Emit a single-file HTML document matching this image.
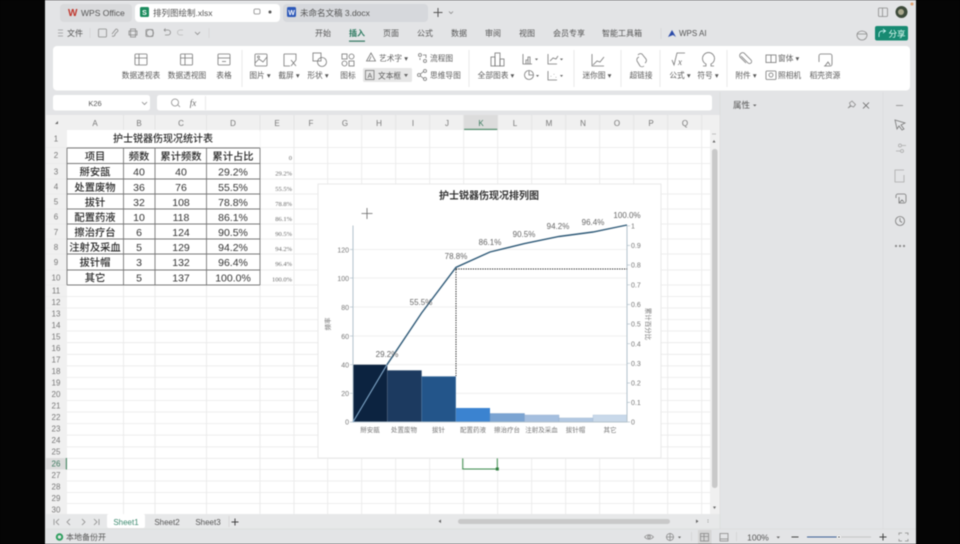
<!DOCTYPE html>
<html><head><meta charset="utf-8"><style>
html,body{margin:0;padding:0;background:#000;width:960px;height:544px;overflow:hidden}
svg{display:block;filter:blur(.5px)}
text{font-family:"Liberation Sans","Noto Sans CJK SC",sans-serif;fill:#555}
.r{font-size:7.7px;text-anchor:middle;fill:#5a5a5a}
.m{font-size:8px;text-anchor:middle;fill:#555}
.h{font-size:8px;text-anchor:middle;fill:#777}
.t{font-size:10.5px;text-anchor:middle;fill:#333}
.b{font-size:10.3px;text-anchor:middle;fill:#2a2a2a;font-weight:500}
.e{font-family:"Liberation Serif",serif;font-size:6.5px;text-anchor:end;fill:#6a6a6a}
.a{font-size:7px;fill:#777}
.p{font-size:8px;text-anchor:middle;fill:#666}
.c{font-size:6.5px;text-anchor:middle;fill:#777}
.i{fill:none;stroke:#777;stroke-width:.8}
.l{fill:none;stroke:#8a8a8a;stroke-width:.8}
</style></head><body>
<svg width="960" height="544" viewBox="0 0 960 544" xmlns="http://www.w3.org/2000/svg">
<rect width="960" height="544" fill="#050505"/>
<rect x="45" width="871" height="544" fill="#e3e4e6"/>

<!-- title tabs -->
<rect x="60" y="4" width="72" height="18" rx="4" fill="#d9dadc"/>
<rect x="135" y="4" width="145" height="18" rx="4" fill="#fff"/>
<rect x="283" y="4" width="145" height="18" rx="4" fill="#d6d8dc"/>
<text x="68" y="16" style="font-size:10px;font-weight:bold;fill:#c0362c">W</text>
<text x="81" y="16" style="font-size:8.5px;fill:#555">WPS Office</text>
<rect x="140" y="7" width="9" height="10" rx="1.500" fill="#1c8c5e"/><text x="144.500" y="15" style="font-size:7px;fill:#fff;text-anchor:middle;font-weight:bold">S</text>
<text x="153" y="16" style="font-size:8.500px;fill:#555">排列图绘制.xlsx</text>
<rect x="254" y="9" width="6" height="5" rx="1.500" class="l"/><circle cx="270" cy="12" r="1.500" fill="#555"/>
<rect x="287" y="7" width="9" height="10" rx="1.500" fill="#2b57b8"/><text x="291.500" y="15" style="font-size:7px;fill:#fff;text-anchor:middle;font-weight:bold">W</text>
<text x="300" y="16" style="font-size:8.500px;fill:#555">未命名文稿 3.docx</text>
<path d="M438 8v9M433.500 12.500h9" stroke="#555" stroke-width="1" fill="none"/>
<path d="M449 11.500l2 2 2-2" class="l"/>
<rect x="878.500" y="8" width="9" height="8.500" rx="1" class="l"/><path d="M882.500 8v8.500" class="l"/>
<circle cx="901.500" cy="12" r="6" fill="#3d4a3a"/><circle cx="901" cy="12" r="3" fill="#a9a78c"/>
<circle cx="912" cy="4" r="1.500" fill="#e0a070"/>

<!-- menu bar -->
<path d="M58 30h5M58 33h5M58 36h5" stroke="#999" stroke-width=".7"/>
<text x="75" y="36" class="m">文件</text>
<path d="M90 28v10M209 28v10" stroke="#d3d3d3" stroke-width=".7"/>
<rect x="98.500" y="29" width="8" height="8" rx="1" class="l"/>
<path d="M116 29a2 2 0 012 2l-3 3a2 2 0 01-3 2M116 29l-4 5" class="l"/>
<rect x="129" y="31" width="8" height="4" class="l"/><rect x="130.500" y="29" width="5" height="8" class="l"/>
<circle cx="150" cy="33" r="3.500" class="l"/><rect x="146" y="29.500" width="7" height="7" rx="1" class="l"/>
<path d="M164 30h4a2.500 2.500 0 010 5h-3M164 30l1.500-1.500M164 30l1.500 1.500" class="l"/>
<path d="M183 30h-3a2.500 2.500 0 000 5h3" fill="none" stroke="#bbb" stroke-width=".8"/>
<path d="M195 32l2.500 2.500 2.500-2.500" class="l"/>
<text x="323" y="36" class="m">开始</text>
<text x="357" y="36" class="m" style="fill:#2c7a60;font-weight:bold">插入</text>
<text x="391" y="36" class="m">页面</text>
<text x="425" y="36" class="m">公式</text>
<text x="459" y="36" class="m">数据</text>
<text x="493" y="36" class="m">审阅</text>
<text x="527" y="36" class="m">视图</text>
<text x="569" y="36" class="m">会员专享</text>
<text x="622" y="36" class="m">智能工具箱</text>
<rect x="349" y="40.500" width="16" height="1.300" fill="#3f7f6b"/>
<path d="M661 28v11" stroke="#d3d3d3" stroke-width=".7"/>
<path d="M668 37l4-7 4 7-3-2z" fill="#2a4aa8"/>
<text x="679" y="36" style="font-size:8px;fill:#555">WPS AI</text>
<path d="M857 35a5 4 0 0110 0 3 3 0 01-10 0M857 34h10" class="l"/>
<rect x="875" y="26" width="33" height="14.500" rx="2" fill="#178a72"/>
<path d="M879 37v-3a3 3 0 013-3h3M883 29l2.500 2-2.500 2" stroke="#dff" fill="none" stroke-width=".8"/>
<text x="897" y="37" style="font-size:8.500px;fill:#e8fff8;text-anchor:middle">分享</text>

<!-- ribbon -->
<rect x="53" y="46" width="857" height="44.500" rx="4" fill="#fff"/>
<path d="M242 50v37M469 50v37M574 50v37M621 50v37M660 50v37M727 50v37" stroke="#e4e4e4" stroke-width=".8"/>
<!-- ribbon icons -->
<rect x="135" y="54" width="12" height="11" rx="1" class="i"/><path d="M135 58h12M139 54v11" class="i"/>
<rect x="180.500" y="54" width="12" height="11" rx="1" class="i"/><path d="M180.500 58h12M185 54v11" class="i"/>
<rect x="218" y="54" width="12" height="11" rx="1" class="i"/><path d="M218 58h12" class="i"/><path d="M222 61.500h4" class="i"/>
<rect x="255" y="54" width="12" height="12" rx="1" class="i"/><path d="M255 63l4-4 4 3 4-5" class="i"/><circle cx="258.500" cy="57" r="1" class="i"/>
<path d="M284 54h12v6M284 54v12h6" class="i"/><path d="M291 60l5 6M296 60l-5 6" class="i"/>
<rect x="313" y="53" width="8" height="8" class="i"/><circle cx="322" cy="62" r="4.500" class="i"/>
<rect x="342" y="54" width="5" height="5" class="i"/><circle cx="351.500" cy="56.500" r="2.500" class="i"/><circle cx="344.500" cy="63.500" r="2.500" class="i"/><rect x="349" y="61" width="5" height="5" class="i"/>
<path d="M371 53l-4.500 8h9zM371 56.500l-2 4.500" class="i"/>
<rect x="363" y="68" width="49" height="14" rx="1.500" fill="#e6e6e6"/>
<rect x="365.500" y="70.500" width="8.500" height="9" class="i"/>
<text x="369.800" y="78" style="font-size:7px;fill:#666;text-anchor:middle">A</text>
<circle cx="420" cy="55" r="1.500" class="i"/><circle cx="425" cy="61" r="1.500" class="i"/><path d="M420 60v-2M423 55h3v3" class="i"/>
<circle cx="419" cy="75" r="1.500" class="i"/><circle cx="425" cy="71" r="1.500" class="i"/><circle cx="425" cy="79" r="1.500" class="i"/><path d="M420.500 74l3-2.500M420.500 76l3 2.500" class="i"/>
<rect x="491" y="57" width="4" height="9" class="i"/><rect x="495" y="53" width="5" height="13" class="i"/><rect x="500" y="59" width="4" height="7" class="i"/>
<path d="M523 54v10h9M526 64v-4h2v4M528 64v-7h2v7" class="i"/>
<path d="M548 54v10h9M550 61l3-3 3 1 2-3" class="i"/>
<circle cx="529" cy="75" r="4.500" class="i"/><path d="M529 71v4h4" class="i"/>
<path d="M548 71v9h9M551 76v.5M554 74v.5M556 77v.5" class="i"/>
<path d="M592 54v12h12M593 65l4-4 3 1 4-5" class="i"/>
<path d="M638 55a3 3 0 014-1l4 5a3 3 0 01-1 4M644 66a3 3 0 01-4 0l-3-5a3 3 0 012-4" class="i"/>
<path d="M672 60l2 5 3-12h8" class="i"/><text x="680" y="65" style="font-size:9px;font-style:italic;fill:#666;text-anchor:middle;font-family:'Liberation Serif',serif">x</text>
<path d="M703 66h3v-2a6 6 0 115 0v2h3" class="i"/>
<path d="M741 56l7 7a2 2 0 003-3l-7-7a3 3 0 00-4 4l6 6" class="i"/>
<rect x="766" y="55" width="10" height="7.500" class="i"/><path d="M771 55v7.500" class="i"/>
<rect x="766" y="71" width="10" height="8.500" rx="1" class="i"/><circle cx="771" cy="75" r="2" class="i"/>
<path d="M819 62v-6a2 2 0 012-2h9a2 2 0 012 2v8a2 2 0 01-2 2h-6M825 66l3-4 2 3" class="i"/>
<!-- ribbon text -->
<text x="141" y="78" class="r">数据透视表</text>
<text x="187" y="78" class="r">数据透视图</text>
<text x="224" y="78" class="r">表格</text>
<text x="260" y="78" class="r">图片 ▾</text>
<text x="289" y="78" class="r">截屏 ▾</text>
<text x="318" y="78" class="r">形状 ▾</text>
<text x="348" y="78" class="r">图标</text>
<text x="379" y="61" style="font-size:7.7px;fill:#5a5a5a">艺术字 ▾</text>
<text x="378" y="78.500" style="font-size:7.7px;fill:#5a5a5a">文本框</text><path d="M404 74h4l-2 3z" fill="#666"/>
<text x="430" y="61" style="font-size:7.7px;fill:#5a5a5a">流程图</text>
<text x="430" y="78" style="font-size:7.7px;fill:#5a5a5a">思维导图</text>
<text x="496" y="78" class="r">全部图表 ▾</text>
<path d="M535 58.500h3l-1.500 2zM560 58.500h3l-1.500 2zM536 75h3l-1.500 2zM560 75h3l-1.500 2z" fill="#666"/>
<text x="597" y="78" class="r">迷你图 ▾</text>
<text x="641" y="78" class="r">超链接</text>
<text x="680" y="78" class="r">公式 ▾</text>
<text x="708" y="78" class="r">符号 ▾</text>
<text x="746" y="78" class="r">附件 ▾</text>
<text x="778" y="61" style="font-size:7.7px;fill:#5a5a5a">窗体 ▾</text>
<text x="778" y="78" style="font-size:7.7px;fill:#5a5a5a">照相机</text>
<text x="825" y="78" class="r">稻壳资源</text>

<!-- formula bar -->
<rect x="53" y="95" width="97" height="15.500" rx="2.500" fill="#fff"/>
<text x="95" y="106" style="font-size:7.500px;fill:#555;text-anchor:middle">K26</text>
<path d="M142 102l2.500 2.500 2.500-2.500" class="l"/>
<rect x="157" y="95" width="555" height="15.500" rx="2.500" fill="#fff"/>
<circle cx="175" cy="102.500" r="3.500" class="l"/><path d="M178 105l2 2" class="l"/>
<text x="193" y="106" style="font-size:9px;font-style:italic;fill:#666;text-anchor:middle;font-family:'Liberation Serif',serif">fx</text>
<path d="M205.500 96v14" stroke="#e3e3e3" stroke-width=".7"/>

<!-- grid -->
<rect x="46" y="115" width="674" height="399" fill="#fff"/>
<rect x="46" y="115" width="664" height="15" fill="#f0f0f0"/>
<rect x="46" y="115" width="21" height="399" fill="#f0f0f0"/>
<rect x="463.700" y="115" width="34" height="15" fill="#dcdcdc"/>
<rect x="463.700" y="128.800" width="34" height="1.200" fill="#4f8a6a"/>
<rect x="46" y="458" width="21" height="11.500" fill="#dcdcdc"/>
<rect x="65.800" y="458" width="1.200" height="11.500" fill="#4f8a6a"/>
<path d="M67 147.500H710M67 163.500H710M67 179H710M67 194H710M67 209H710M67 224H710M67 239H710M67 254H710M67 270H710M67 285H710M67 296.500H710M67 308H710M67 319.600H710M67 331H710M67 342.700H710M67 354.300H710M67 365.800H710M67 377.400H710M67 389H710M67 400.500H710M67 412H710M67 423.600H710M67 435.200H710M67 446.800H710M67 458.300H710M67 469.500H710M67 481H710M67 492.500H710M67 503.500H710" stroke="#e9e9e9" stroke-width=".8"/>
<path d="M123.500 147V514M155 147V514M206.500 130V514M260 130V514M294 130V514M327.700 130V514M361.700 130V514M395.700 130V514M429.700 130V514M463.700 130V514M497.700 130V514M531.700 130V514M565.700 130V514M599.700 130V514M633.700 130V514M667.700 130V514M701.700 130V514" stroke="#e9e9e9" stroke-width=".8"/>
<path d="M123.500 115V130M155 115V130M206.500 115V130M260 115V130M294 115V130M327.700 115V130M361.700 115V130M395.700 115V130M429.700 115V130M463.700 115V130M497.700 115V130M531.700 115V130M565.700 115V130M599.700 115V130M633.700 115V130M667.700 115V130M701.700 115V130" stroke="#e2e2e2" stroke-width=".8"/>
<path d="M46 147.500H67M46 163.500H67M46 179H67M46 194H67M46 209H67M46 224H67M46 239H67M46 254H67M46 270H67M46 285H67M46 296.500H67M46 308H67" stroke="#e6e6e6" stroke-width=".6"/>
<path d="M58 124l-3 0 3-3z" fill="#666"/>
<!-- col headers -->
<text x="95" y="126" class="h">A</text><text x="139" y="126" class="h">B</text><text x="181" y="126" class="h">C</text><text x="233" y="126" class="h">D</text><text x="277" y="126" class="h">E</text><text x="311" y="126" class="h">F</text><text x="345" y="126" class="h">G</text><text x="379" y="126" class="h">H</text><text x="413" y="126" class="h">I</text><text x="447" y="126" class="h">J</text><text x="481" y="126" class="h" style="fill:#3e7a60">K</text><text x="515" y="126" class="h">L</text><text x="549" y="126" class="h">M</text><text x="583" y="126" class="h">N</text><text x="617" y="126" class="h">O</text><text x="651" y="126" class="h">P</text><text x="685" y="126" class="h">Q</text>
<!-- row headers -->
<g>
<text x="56" y="141.500" class="h">1</text><text x="56" y="158" class="h">2</text><text x="56" y="174.500" class="h">3</text><text x="56" y="189.500" class="h">4</text><text x="56" y="204.500" class="h">5</text><text x="56" y="219.500" class="h">6</text><text x="56" y="235" class="h">7</text><text x="56" y="250" class="h">8</text><text x="56" y="265" class="h">9</text><text x="56" y="280.500" class="h">10</text>
<text x="56" y="293.500" class="h">11</text><text x="56" y="305" class="h">12</text><text x="56" y="316.500" class="h">13</text><text x="56" y="328" class="h">14</text><text x="56" y="339.500" class="h">15</text><text x="56" y="351" class="h">16</text><text x="56" y="362.500" class="h">17</text><text x="56" y="374" class="h">18</text><text x="56" y="385.500" class="h">19</text><text x="56" y="397" class="h">20</text><text x="56" y="408.500" class="h">21</text><text x="56" y="420" class="h">22</text><text x="56" y="431.500" class="h">23</text><text x="56" y="443" class="h">24</text><text x="56" y="454.500" class="h">25</text><text x="56" y="466.500" class="h" style="fill:#3e7a60">26</text><text x="56" y="478" class="h">27</text><text x="56" y="489.500" class="h">28</text><text x="56" y="501" class="h">29</text><text x="56" y="512.500" class="h">30</text>
</g>
<!-- table -->
<rect x="67" y="131" width="193" height="16" fill="#fff"/>
<rect x="67" y="148" width="193" height="137" fill="#fff"/>
<path d="M67 148H260M67 163.500H260M67 179H260M67 194H260M67 209H260M67 224H260M67 239H260M67 254H260M67 270H260M67 285H260M67 148V285M123.500 148V285M155 148V285M206.500 148V285M260 148V285" stroke="#777" stroke-width=".9" fill="none"/>
<text x="163" y="142" class="b" style="font-size:10px">护士锐器伤现况统计表</text>
<text x="95" y="160" class="b">项目</text><text x="139" y="160" class="b">频数</text><text x="181" y="160" class="b">累计频数</text><text x="233" y="160" class="b">累计占比</text>
<text x="95" y="175.500" class="b">掰安瓿</text><text x="139" y="175.500" class="t">40</text><text x="181" y="175.500" class="t">40</text><text x="233" y="175.500" class="t">29.2%</text>
<text x="95" y="191" class="b">处置废物</text><text x="139" y="191" class="t">36</text><text x="181" y="191" class="t">76</text><text x="233" y="191" class="t">55.5%</text>
<text x="95" y="206" class="b">拔针</text><text x="139" y="206" class="t">32</text><text x="181" y="206" class="t">108</text><text x="233" y="206" class="t">78.8%</text>
<text x="95" y="221" class="b">配置药液</text><text x="139" y="221" class="t">10</text><text x="181" y="221" class="t">118</text><text x="233" y="221" class="t">86.1%</text>
<text x="95" y="236" class="b">擦治疗台</text><text x="139" y="236" class="t">6</text><text x="181" y="236" class="t">124</text><text x="233" y="236" class="t">90.5%</text>
<text x="95" y="251" class="b">注射及采血</text><text x="139" y="251" class="t">5</text><text x="181" y="251" class="t">129</text><text x="233" y="251" class="t">94.2%</text>
<text x="95" y="266" class="b">拔针帽</text><text x="139" y="266" class="t">3</text><text x="181" y="266" class="t">132</text><text x="233" y="266" class="t">96.4%</text>
<text x="95" y="281.500" class="b">其它</text><text x="139" y="281.500" class="t">5</text><text x="181" y="281.500" class="t">137</text><text x="233" y="281.500" class="t">100.0%</text>
<text x="292" y="160" class="e">0</text><text x="292" y="175.500" class="e">29.2%</text><text x="292" y="191" class="e">55.5%</text><text x="292" y="206" class="e">78.8%</text><text x="292" y="221" class="e">86.1%</text><text x="292" y="236" class="e">90.5%</text><text x="292" y="251" class="e">94.2%</text><text x="292" y="266" class="e">96.4%</text><text x="292" y="281.500" class="e">100.0%</text>

<!-- selection -->
<path d="M462.700 458V469H497.300V458" fill="none" stroke="#3f8f4f" stroke-width="1"/>
<rect x="495.800" y="467.500" width="3" height="3" fill="#2f7f3f"/>

<!-- chart -->
<rect x="318" y="184" width="343" height="274" fill="#fff" stroke="#e4e4e4" stroke-width=".8"/>
<text x="489" y="199" style="font-size:10px;font-weight:bold;fill:#333;text-anchor:middle">护士锐器伤现况排列图</text>
<path d="M367 208v11M361.500 213.500h11" stroke="#666" stroke-width=".8"/>
<path d="M353 393.300H627M353 364.700H627M353 336H627M353 307H627M353 278H627M353 249.500H627" stroke="#ececec" stroke-width=".8"/>
<rect x="353.300" y="364.700" width="34" height="57.300" fill="#0c2340"/>
<rect x="387.500" y="370.500" width="34" height="51.500" fill="#1c3a60" stroke="#3a5878" stroke-width=".4"/>
<rect x="421.700" y="376.500" width="34" height="45.500" fill="#23558a" stroke="#5a86b0" stroke-width=".4"/>
<rect x="456" y="408" width="34" height="14" fill="#3b83d0"/>
<rect x="490" y="413.500" width="34.500" height="8.500" fill="#7ba4d2" stroke="#6d94c0" stroke-width=".4"/>
<rect x="524.500" y="415" width="34.500" height="7" fill="#a5bfdf" stroke="#8fabcc" stroke-width=".4"/>
<rect x="559" y="418" width="34" height="4" fill="#b3c9e2" stroke="#94aecb" stroke-width=".4"/>
<rect x="593" y="415" width="34" height="7" fill="#c9d9ea" stroke="#a8bfd6" stroke-width=".4"/>
<path d="M353 225.500V422M627 225.500V422M353 422H627" fill="none" stroke="#b4c2cc" stroke-width="1"/>
<path d="M350 422h3M350 393.300h3M350 364.700h3M350 336h3M350 307h3M350 278h3M350 249.500h3" stroke="#b4c2cc" stroke-width=".7"/>
<path d="M627 422h3M627 402.400h3M627 383h3M627 363.300h3M627 343.700h3M627 324h3M627 304.500h3M627 284.800h3M627 265h3M627 245.500h3M627 225.800h3" stroke="#b4c2cc" stroke-width=".7"/>
<path d="M456 269H627M456 267V376" fill="none" stroke="#1a1a1a" stroke-width="1" stroke-dasharray="1.200 1.200"/>
<path d="M353 422L387 364.700" stroke="#7fa6c8" stroke-width="1.100" fill="none"/>
<path d="M387 364.700L421.600 313L456 267.300L490 252L524.500 243.600L559 236.500L593 232L627 225" stroke="#2f5a78" stroke-width="1.400" fill="none"/>
<text x="387" y="357" class="p">29.2%</text><text x="421" y="305" class="p">55.5%</text><text x="456" y="259" class="p">78.8%</text><text x="490" y="245" class="p">86.1%</text><text x="524" y="237" class="p">90.5%</text><text x="558" y="229" class="p">94.2%</text><text x="593" y="225" class="p">96.4%</text><text x="627" y="218" class="p">100.0%</text>
<text x="349" y="424.500" class="a" text-anchor="end">0</text><text x="349" y="396" class="a" text-anchor="end">20</text><text x="349" y="367.500" class="a" text-anchor="end">40</text><text x="349" y="339" class="a" text-anchor="end">60</text><text x="349" y="310" class="a" text-anchor="end">80</text><text x="349" y="281" class="a" text-anchor="end">100</text><text x="349" y="252.500" class="a" text-anchor="end">120</text>
<text x="631" y="424.500" class="a">0</text><text x="631" y="405" class="a">0.1</text><text x="631" y="385.500" class="a">0.2</text><text x="631" y="366" class="a">0.3</text><text x="631" y="346.500" class="a">0.4</text><text x="631" y="326.500" class="a">0.5</text><text x="631" y="307" class="a">0.6</text><text x="631" y="287.500" class="a">0.7</text><text x="631" y="267.500" class="a">0.8</text><text x="631" y="248" class="a">0.9</text><text x="631" y="228.500" class="a">1</text>
<text transform="translate(330,324) rotate(-90)" class="c">频率</text>
<text transform="translate(646,324) rotate(90)" class="c">累计百分比</text>
<text x="370" y="432" class="c">掰安瓿</text><text x="404" y="432" class="c">处置废物</text><text x="438.500" y="432" class="c">拔针</text><text x="473" y="432" class="c">配置药液</text><text x="507" y="432" class="c">擦治疗台</text><text x="541.500" y="432" class="c">注射及采血</text><text x="575.500" y="432" class="c">拔针帽</text><text x="610" y="432" class="c">其它</text>

<!-- vertical scrollbar -->
<rect x="710" y="115" width="10" height="399" fill="#f0f0f0"/>
<rect x="712" y="149" width="5.500" height="339" rx="2.500" fill="#c9c9c9"/>
<path d="M712 134h4" stroke="#aaa" stroke-width=".7"/>
<path d="M714 140l-1.500 2.500h3zM714.500 509l-1.500-2.500h3z" fill="#666"/>

<!-- sheet tab bar -->
<rect x="46" y="514" width="674" height="15" fill="#e7e8e9"/>
<rect x="107" y="514" width="38" height="14" rx="2" fill="#fff"/>
<path d="M54 519v6M59 519l-3 3 3 3M70 519l-3 3 3 3M82 519l3 3-3 3M94 519l3 3-3 3M99 519v6" class="l"/>
<text x="126" y="525" style="font-size:8px;fill:#3e8a70;text-anchor:middle">Sheet1</text>
<text x="167" y="525" style="font-size:8px;fill:#555;text-anchor:middle">Sheet2</text>
<text x="208" y="525" style="font-size:8px;fill:#555;text-anchor:middle">Sheet3</text>
<path d="M229 516v11" stroke="#d0d0d0" stroke-width=".7"/>
<path d="M235 518.500v7M231.500 522h7" stroke="#444" stroke-width="1"/>
<rect x="458" y="519" width="212" height="5" rx="2.500" fill="#c9c9c9"/>
<path d="M696 519.500l2.500 1.800-2.500 1.800zM441 519.500l-2.500 1.800 2.500 1.800z" fill="#666"/>
<path d="M708 519.500v4" stroke="#999" stroke-width="1" stroke-dasharray="1 1"/>

<!-- status bar -->
<rect x="45" y="529" width="871" height="15" fill="#e3e4e6"/>
<path d="M46 529H916" stroke="#d6d6d6" stroke-width=".6"/>
<circle cx="59.500" cy="537" r="2.700" fill="none" stroke="#2f9f5f" stroke-width="2"/>
<text x="66" y="540" style="font-size:8px;fill:#555">本地备份开</text>
<path d="M644.500 537q4.500-4.500 9 0q-4.500 4.500-9 0" class="l"/><circle cx="649" cy="537" r="1.300" class="l"/>
<circle cx="670" cy="537" r="3.500" class="l"/><path d="M670 533v8M666 537h8" class="l"/>
<path d="M678 536.500h3l-1.500 2z" fill="#666"/>
<path d="M691.500 532v9M736.500 532v9" stroke="#d0d0d0" stroke-width=".7"/>
<rect x="698" y="530" width="13.500" height="14" fill="#d5d5d5"/>
<rect x="700.500" y="533.500" width="8" height="7.500" class="l"/><path d="M700.500 536.500h8M704 533.500v7.500" class="l"/>
<rect x="720" y="533.500" width="8" height="7.500" class="l"/><path d="M720 539h8" class="l"/>
<text x="758" y="540.500" style="font-size:8.500px;fill:#555;text-anchor:middle">100%</text>
<path d="M776.500 536.500h3.500l-1.750 2z" fill="#666"/>
<path d="M791.500 537h7" stroke="#444" stroke-width="1"/>
<path d="M807 537h32" stroke="#3a5f95" stroke-width="1"/><path d="M839 537h32" stroke="#bbb" stroke-width=".8"/>
<circle cx="839" cy="537" r="2.200" fill="#fff" stroke="#ccc" stroke-width=".5"/><circle cx="839" cy="537" r=".8" fill="#444"/>
<path d="M883 533.500v7M879.500 537h7" stroke="#444" stroke-width="1"/>
<path d="M899 535v-2h3M905 533h3v2M899 539v2h3M905 541h3v-2" class="l"/>

<!-- right panel -->
<path d="M720 92V529" stroke="#d9d9d9" stroke-width=".6"/>
<path d="M883 92V529" stroke="#dadada" stroke-width=".6"/>
<text x="733" y="108" style="font-size:8.500px;fill:#555">属性</text>
<path d="M753 104.500h3.500l-1.750 2z" fill="#666"/>
<path d="M848 108l2.500-2.500-1-2.500 2.500-2 3.500 3.500-2 2.500-2.500-1z" class="l"/>
<path d="M863 102.500l6 6M869 102.500l-6 6" stroke="#666" stroke-width=".8"/>
<path d="M896 105.500h7" stroke="#888" stroke-width=".8"/>
<path d="M895 120l10 3-4 2 3 4-2 1-3-4-2 3z" class="i"/>
<circle cx="900" cy="145.500" r="1.500" fill="none" stroke="#aaa" stroke-width=".8"/><circle cx="902" cy="151" r="1.500" fill="none" stroke="#aaa" stroke-width=".8"/><path d="M902 145.500h4M896 151h4" stroke="#aaa" stroke-width=".8"/>
<path d="M904 170h-9v12h9v-7" stroke="#aaa" stroke-width=".8" fill="none"/>
<path d="M896 198v-2a2 2 0 012-2h6a2 2 0 012 2v5a2 2 0 01-2 2h-5v-6M899 203l3-3 2 2" class="i"/>
<circle cx="900" cy="221" r="4.500" class="i"/><path d="M900 218v3l2 1.500" class="i"/>
<circle cx="896" cy="246" r="1.100" fill="#888"/><circle cx="900" cy="246" r="1.100" fill="#888"/><circle cx="904" cy="246" r="1.100" fill="#888"/>
</svg>
</body></html>
